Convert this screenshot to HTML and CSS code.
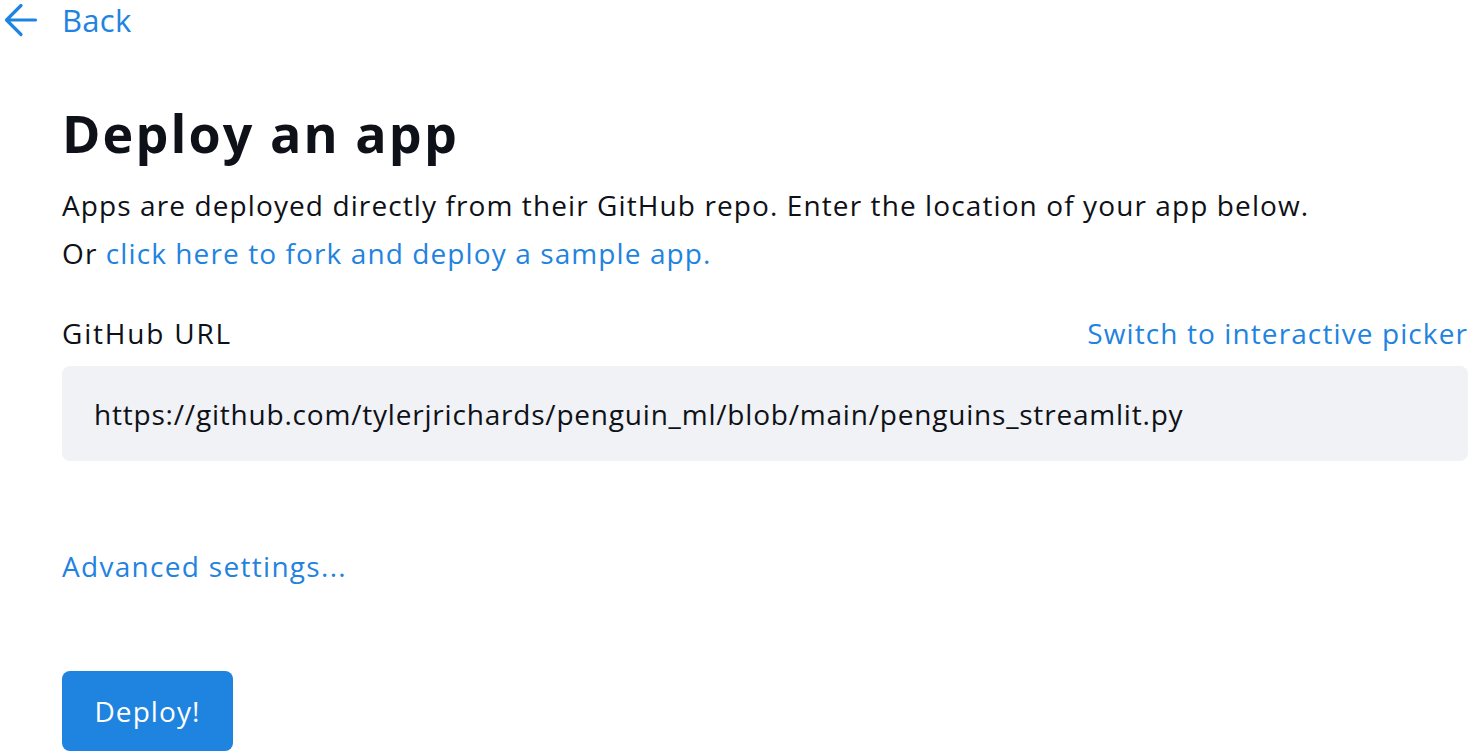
FILE: index.html
```html
<!DOCTYPE html>
<html lang="en">
<head>
<meta charset="utf-8">
<title>Deploy an app</title>
<link rel="stylesheet" href="styles.css">
</head>
<body>
<header class="topbar">
  <a class="back" href="#">
    <svg class="back-icon" width="34" height="34" viewBox="0 0 34 34" aria-hidden="true">
      <path d="M31.5 17H2.5M17 2.5L2.5 17L17 31.5" fill="none" stroke="#1f83e0" stroke-width="3.2" stroke-linecap="round" stroke-linejoin="round"/>
    </svg>
    <span class="back-label">Back</span>
  </a>
</header>
<main class="content">
  <h1 class="title">Deploy an app</h1>
  <p class="lead">Apps are deployed directly from their GitHub repo. Enter the location of your app below.</p>
  <p class="lead">Or <a class="link" href="#">click here to fork and deploy a sample app.</a></p>
  <div class="field-head">
    <span class="field-label">GitHub URL</span>
    <a class="link" href="#">Switch to interactive picker</a>
  </div>
  <div class="input">https://github.com/tylerjrichards/penguin_ml/blob/main/penguins_streamlit.py</div>
  <a class="link advanced" href="#">Advanced settings...</a>
  <button class="deploy" type="button">Deploy!</button>
</main>
</body>
</html>
```
FILE: styles.css
```css
html, body {
  margin: 0;
  padding: 0;
  background: #ffffff;
}
body {
  font-family: "Open Sans", "Noto Sans", sans-serif;
  color: #0e1117;
  font-size: 28px;
  letter-spacing: 1.1px;
}
a {
  text-decoration: none;
  color: #1f83e0;
}
.topbar {
  padding: 3px 0 0 4px;
}
.back {
  display: flex;
  align-items: center;
  gap: 24px;
  height: 34px;
}
.back-icon {
  display: block;
}
.back-label {
  font-size: 31px;
  line-height: 34px;
  letter-spacing: 0.3px;
}
.content {
  padding: 0 6px 0 62px;
}
.title {
  margin: 60px 0 12px;
  font-size: 52px;
  font-weight: 700;
  line-height: 72px;
  letter-spacing: 2.1px;
  color: #0e1117;
}
.lead {
  margin: 0;
  line-height: 48px;
}
.field-head {
  margin-top: 32px;
  display: flex;
  justify-content: space-between;
  align-items: center;
  line-height: 48px;
}
.field-label {
  letter-spacing: 1.8px;
}
.input {
  margin-top: 9px;
  height: 95px;
  box-sizing: border-box;
  background: #f0f2f6;
  border-radius: 8px;
  padding: 0 32px;
  display: flex;
  align-items: center;
  font-size: 28px;
  letter-spacing: 0.8px;
}
.advanced {
  display: block;
  margin-top: 81px;
  line-height: 48px;
  letter-spacing: 1.3px;
}
.deploy {
  display: block;
  margin-top: 81px;
  width: 171px;
  height: 80px;
  border: 0;
  border-radius: 8px;
  background: #1f83e0;
  color: #ffffff;
  font-family: inherit;
  font-size: 28px;
  letter-spacing: 1.1px;
  cursor: pointer;
}
```
